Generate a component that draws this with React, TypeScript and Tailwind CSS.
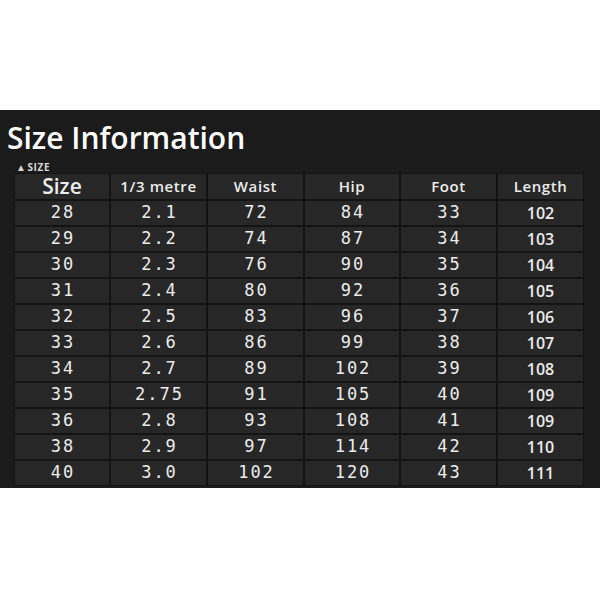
const rows: [string, string, string, string, string, string][] = [
  ["28", "2.1", "72", "84", "33", "102"],
  ["29", "2.2", "74", "87", "34", "103"],
  ["30", "2.3", "76", "90", "35", "104"],
  ["31", "2.4", "80", "92", "36", "105"],
  ["32", "2.5", "83", "96", "37", "106"],
  ["33", "2.6", "86", "99", "38", "107"],
  ["34", "2.7", "89", "102", "39", "108"],
  ["35", "2.75", "91", "105", "40", "109"],
  ["36", "2.8", "93", "108", "41", "109"],
  ["38", "2.9", "97", "114", "42", "110"],
  ["40", "3.0", "102", "120", "43", "111"],
];

const headers = ["Size", "1/3 metre", "Waist", "Hip", "Foot", "Length"];

const cell = "flex items-center justify-center border border-[#131313] bg-[#272727] text-[#ececec]";

const App = () => {
  return (
    <div className="w-[600px] h-[600px] bg-white" style={{ fontFamily: '"Open Sans", sans-serif' }}>
      <div className="h-[110px]" />
      <div className="h-[378px] bg-[#1b1b1b] pl-[14px] pr-[16px]">
        {/* Title */}
        <h1 className="-ml-[7px] pt-[6px] h-[50px] text-[30px] leading-[44px] font-semibold text-white">
          Size Information
        </h1>
        <div className="flex items-end gap-[1px] h-[13px] pl-[2px] text-[10px] leading-[12px] font-bold text-[#d8d8d8] tracking-[0.6px]">
          <span className="text-[10px] leading-[12px]">▲</span>
          <span>SIZE</span>
        </div>

        {/* Table */}
        <div className="grid grid-cols-[96px_97px_97px_96px_97px_87px] grid-rows-[27px_repeat(11,26px)]">
          {headers.map((h, i) => (
            <div
              key={h}
              className={`${cell} ${i === 0 ? "text-[21px] font-semibold" : "text-[15px] font-semibold tracking-[0.6px]"}`}
            >
              {h}
            </div>
          ))}
          {rows.map((r) =>
            r.map((v, i) => (
              <div
                key={r[0] + "-" + i}
                className={`${cell} ${
                  i === 5
                    ? "text-[16px] font-semibold"
                    : "text-[17px] tracking-[2px] pl-[2px]"
                }`}
                style={i === 5 ? undefined : { fontFamily: '"DejaVu Sans Mono", monospace' }}
              >
                {v}
              </div>
            ))
          )}
        </div>
      </div>
    </div>
  );
};

export default App;
